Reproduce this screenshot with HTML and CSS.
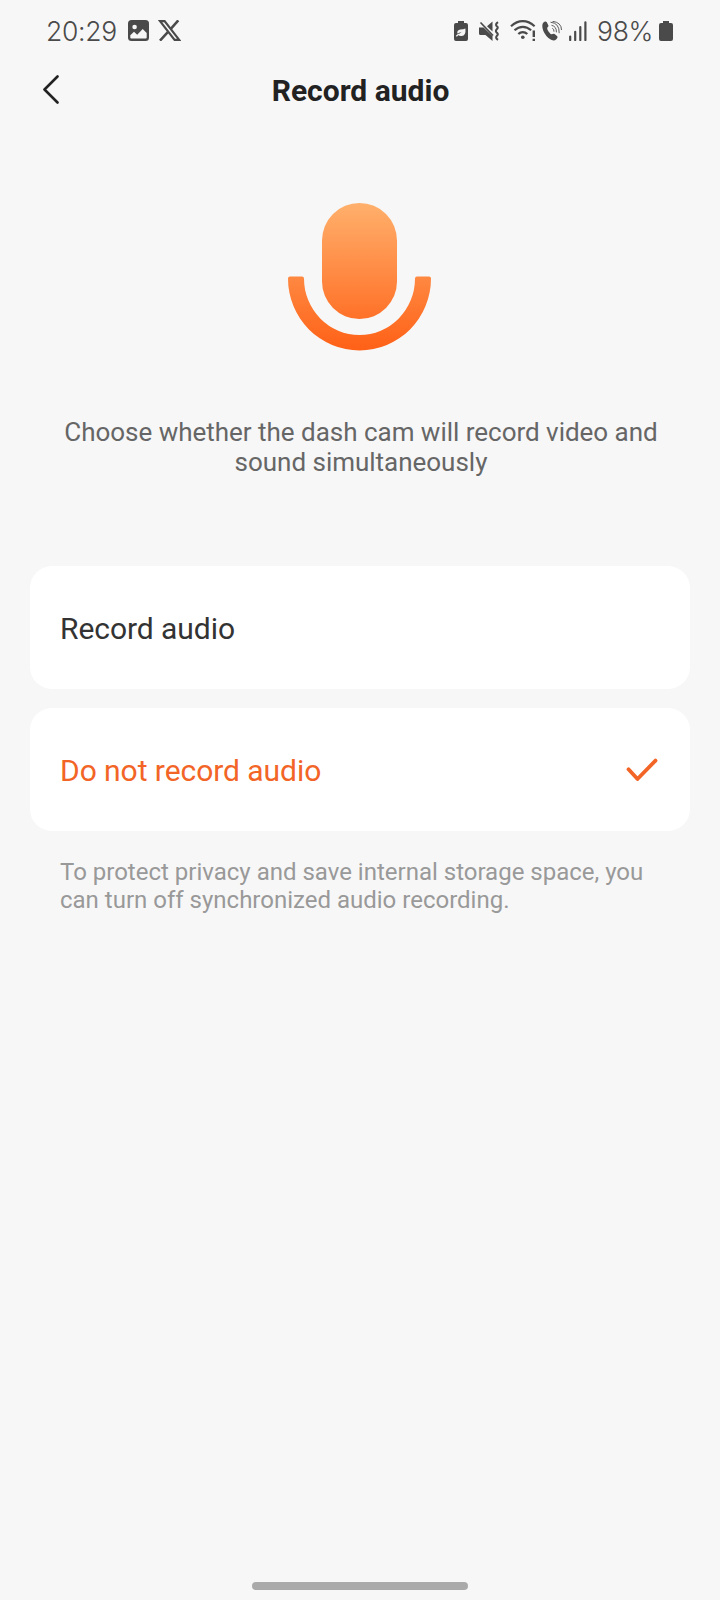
FILE: index.html
```
<!DOCTYPE html>
<html lang="en">
<head>
  <meta charset="UTF-8">
  <meta name="viewport" content="width=device-width, initial-scale=1.0">
  <title>Record audio</title>
  <link rel="stylesheet" href="styles.css">
</head>
<body>

  <div class="status-bar">
    <div class="status-left">
      <span class="time">20:29</span>
      <svg class="icon-picture" width="21" height="21" viewBox="0 0 21 21">
        <rect width="21" height="21" rx="3.5" fill="#4a4a4a"/>
        <circle cx="6.6" cy="7" r="2.3" fill="#f7f7f7"/>
        <path d="M2.3 17.5v-2.2l3.7-3.6 3.2 3 5.5-5.6 4 4v4.4q0 1-1 1H3.3q-1 0-1-1z" fill="#f7f7f7"/>
      </svg>
      <svg class="icon-x" width="23" height="21" viewBox="0 0 23 21">
        <path d="M20.3.3 12.8 8.8M9.8 12.2 2 20.7" fill="none" stroke="#4a4a4a" stroke-width="2.5"/>
        <path d="M2 1.1h4.6l14.6 18.8h-4.6z" fill="#f7f7f7" stroke="#4a4a4a" stroke-width="2.2"/>
      </svg>
    </div>
    <div class="status-right">
      <svg width="14" height="20" viewBox="0 0 14 20">
        <path d="M4 0h6v2h2q2 0 2 2v14q0 2-2 2H2q-2 0-2-2V4q0-2 2-2h2z" fill="#4a4a4a"/>
        <path d="M11.4 7.5q.8 7-3.8 7.6-2.3.2-3.6-1.4l3.8-2.9-4.5 1.6q-.3-3.3 3-3.8 3.3-.2 5.1-1.1z" fill="#f7f7f7"/>
        <path d="M4.8 13 2.3 15.3" stroke="#f7f7f7" stroke-width="1.2"/>
      </svg>
      <svg class="icon-mute" width="22" height="20" viewBox="0 0 22 20">
        <path d="M0 6.5h4.5L13.5 15v5l-7-6H1.5Q0 14 0 12.5zM8 5.2 13.5.5v10z" fill="#4a4a4a"/>
        <path d="M1.5 1.5 14 14.5" stroke="#4a4a4a" stroke-width="1.7"/>
        <path d="M19 1.2Q16 3.200 17.600 5 19.800 6.500 17.800 8.200 16 10 17.800 11.600 19.800 13.200 17.800 14.900 16 16.800 19 18.800" fill="none" stroke="#4a4a4a" stroke-width="2.1"/>
      </svg>
      <svg class="icon-wifi" width="27" height="21" viewBox="0 0 27 21">
        <g fill="none" stroke="#4a4a4a" stroke-width="2.2">
          <path d="M1 6.2Q6.5 1.2 12.8 1.2T24.6 6.2"/>
          <path d="M4.5 10.3Q8.3 6.8 12.8 6.8T21.1 10.3"/>
          <path d="M8.3 14Q10.3 12.1 12.8 12.1T17.3 14"/>
        </g>
        <circle cx="12.8" cy="17.2" r="1.8" fill="#4a4a4a"/>
        <path d="M23.8 10.5v6.5M23.8 18.7v2.2" stroke="#4a4a4a" stroke-width="2.4"/>
      </svg>
      <svg class="icon-call" width="21" height="20" viewBox="0 0 21 20">
        <path d="M1.2 1.8Q3.3-.3 4.8 1.2L6.3 4.2Q6.8 5.3 5.4 6.6 4.7 7.7 6.5 10.6 8.3 13.3 9.7 13.3 11.5 12.2 12.6 13L15 14.900Q16.200 16.100 14.600 17.900 11.400 21.400 6.400 17 1.700 12.500.6 7.400-.2 3.500 1.200 1.800z" fill="#4a4a4a"/>
        <path d="M8.5 1.2Q17.5 2 17.2 12.2M9.5 4.3Q14.6 5.3 14.4 11.3M10.3 7.3Q12.2 8 12 10.7M10.5.3Q19.5 1.5 19.5 9" fill="none" stroke="#4a4a4a" stroke-width=".9"/>
      </svg>
      <svg class="icon-signal" width="18" height="20" viewBox="0 0 18 20">
        <path d="M1.2 15.5V19M6.2 10.8V19M11.3 6V19M16.4 1.3V19" stroke="#4a4a4a" stroke-width="2.2" stroke-linecap="round"/>
      </svg>
      <span class="percent">98%</span>
      <svg class="icon-battery" width="14" height="20" viewBox="0 0 14 20">
        <path d="M4 0h6v2h2q2 0 2 2v14q0 2-2 2H2q-2 0-2-2V4q0-2 2-2h2z" fill="#4a4a4a"/>
      </svg>
    </div>
  </div>

  <header class="header">
    <svg class="back" width="18" height="30" viewBox="0 0 18 30">
      <path d="M15.5 1.5 2.5 14.5l13 13" fill="none" stroke="#222" stroke-width="2.6" stroke-linecap="round" stroke-linejoin="round"/>
    </svg>
    <h1>Record audio</h1>
  </header>

  <main>
    <svg class="mic" width="144" height="148" viewBox="0 0 144 148">
      <defs>
        <linearGradient id="orange" gradientUnits="userSpaceOnUse" x1="0" y1="0" x2="0" y2="148">
          <stop offset="0" stop-color="#ffb06c"/>
          <stop offset="1" stop-color="#ff6016"/>
        </linearGradient>
      </defs>
      <rect x="34" y="0" width="75" height="116" rx="37.5" fill="url(#orange)"/>
      <path d="M2 73.5H14Q16 73.5 16 75.5A55.5 56.5 0 0 0 127 75.5Q127 73.5 129 73.5H141Q143 73.5 143 75.5A71.5 72 0 0 1 0 75.5Q0 73.5 2 73.5z" fill="url(#orange)"/>
    </svg>

    <p class="desc">Choose whether the dash cam will record video and sound simultaneously</p>

    <div class="options">
      <div class="option">Record audio</div>
      <div class="option selected">
        Do not record audio
        <svg class="check" width="32" height="24" viewBox="0 0 32 24">
          <path d="M2.5 11.3 11.5 21 29.5 2.6" fill="none" stroke="#f26526" stroke-width="3.8" stroke-linecap="round" stroke-linejoin="round"/>
        </svg>
      </div>
    </div>

    <p class="hint">To protect privacy and save internal storage space, you can turn off synchronized audio recording.</p>
  </main>

  <div class="home-bar"></div>

</body>
</html>
```
FILE: styles.css
```
* {
  box-sizing: border-box;
}

body {
  font-family: Roboto, "Liberation Sans", sans-serif;
  background: #f7f7f7;
  margin: 0;
  height: 1600px;
  display: flex;
  flex-direction: column;
  color: #333;
}

.status-bar {
  display: flex;
  justify-content: space-between;
  align-items: center;
  height: 61px;
  padding: 0 47px 0 46px;
  color: #4a4a4a;
  font-family: Inter, Roboto, sans-serif;
  font-size: 26.5px;
  font-weight: 350;
  letter-spacing: -0.3px;
}

.status-left,
.status-right {
  display: flex;
  align-items: center;
}

.time {
  width: 82px;
}

.icon-x {
  margin-left: 9px;
}

.icon-mute {
  margin-left: 11px;
}

.icon-wifi {
  margin-left: 9px;
}

.icon-call {
  margin-left: 5px;
}

.icon-signal {
  margin-left: 6px;
}

.percent {
  width: 57px;
  margin-left: 10px;
}

.icon-battery {
  margin-left: 5px;
}

.header {
  display: grid;
  grid-template-columns: 60px 1fr 60px;
  align-items: center;
  height: 58px;
}

.back {
  justify-self: end;
}

h1 {
  margin: 0 0 0 1px;
  font-size: 30px;
  font-weight: 700;
  text-align: center;
  color: #222;
}

main {
  flex: 1;
  padding: 84px 30px 0;
}

.mic {
  display: block;
  margin: 0 auto;
}

.desc {
  margin: 66px 29px 0 31px;
  font-size: 26px;
  letter-spacing: -0.02px;
  line-height: 30px;
  text-align: center;
  color: #666;
}

.options {
  display: flex;
  flex-direction: column;
  gap: 19px;
  margin-top: 89px;
}

.option {
  display: flex;
  justify-content: space-between;
  align-items: center;
  height: 123px;
  padding: 2px 32px 0 30px;
  border-radius: 22px;
  background: #fff;
  font-size: 30px;
  letter-spacing: -0.05px;
}

.selected {
  color: #f26526;
}

.check {
  margin-bottom: 2px;
}

.hint {
  margin: 27px 30px 0;
  font-size: 24px;
  line-height: 28px;
  color: #999;
}

.home-bar {
  width: 216px;
  height: 8px;
  margin: 0 auto 10px;
  border-radius: 4px;
  background: #aaa;
}
```
